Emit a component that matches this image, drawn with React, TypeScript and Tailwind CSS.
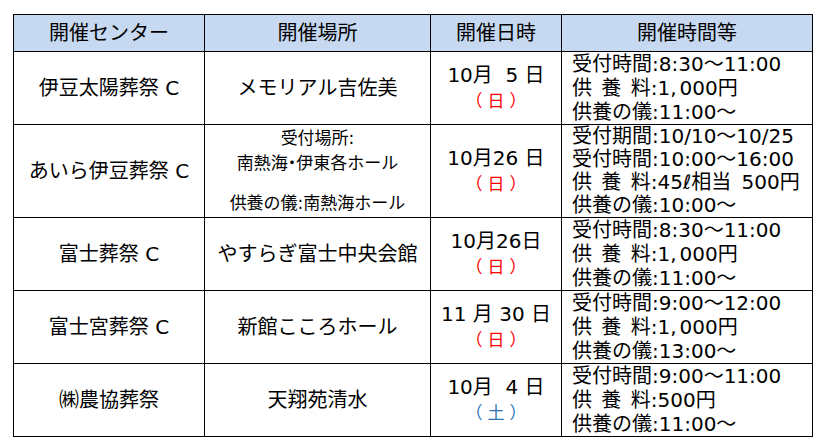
import React from "react";

const FONT = "[font-family:'DejaVu_Sans','Noto_Sans_CJK_JP',sans-serif]";

function DateCell({ date, dow, blue }: { date: string; dow: string; blue?: boolean }) {
  return (
    <td className="border border-black text-center align-middle">
      <div className="text-[20px] leading-[26px] whitespace-pre text-black">{date}</div>
      <div
        className={`text-[17px] leading-[26px] tracking-[5px] pl-[5px] ${
          blue ? "text-[#2f75b5]" : "text-[#ff0000]"
        }`}
      >
        （{dow}）
      </div>
    </td>
  );
}

const Kyo = () => <span className="[word-spacing:3px]">供 養 料</span>;
const Comma = () => <span className="tracking-[3px]">,</span>;

function InfoCell({ lines, leading }: { lines: React.ReactNode[]; leading?: string }) {
  return (
    <td className="border border-black align-middle pl-[10px]">
      {lines.map((l, i) => (
        <div key={i} className={`text-[20px] whitespace-pre text-black ${leading ?? "leading-[24px]"}`}>
          {l}
        </div>
      ))}
    </td>
  );
}

const fee1000 = (
  <>
    <Kyo />:1<Comma />000円
  </>
);

export default function App() {
  return (
    <div className={`w-[827px] h-[446px] bg-white pl-[13px] pt-[14px] ${FONT}`}>
      <table className="table-fixed border-collapse w-[799px] text-black">
        <colgroup>
          <col className="w-[191px]" />
          <col className="w-[226px]" />
          <col className="w-[131px]" />
          <col className="w-[251px]" />
        </colgroup>
        <thead>
          <tr className="h-[37px] bg-[#c6d9f0]">
            <th className="border border-black font-normal text-[20px] text-center align-middle">開催センター</th>
            <th className="border border-black font-normal text-[20px] text-center align-middle">開催場所</th>
            <th className="border border-black font-normal text-[20px] text-center align-middle">開催日時</th>
            <th className="border border-black font-normal text-[20px] text-center align-middle">開催時間等</th>
          </tr>
        </thead>
        <tbody>
          <tr className="h-[72px]">
            <td className="border border-black text-center align-middle text-[20px]">伊豆太陽葬祭 C</td>
            <td className="border border-black text-center align-middle text-[20px]">メモリアル吉佐美</td>
            <DateCell date="10月  5 日" dow="日" />
            <InfoCell lines={["受付時間:8:30～11:00", fee1000, "供養の儀:11:00～"]} />
          </tr>
          <tr className="h-[93px]">
            <td className="border border-black text-center align-middle text-[20px]">あいら伊豆葬祭 C</td>
            <td className="border border-black text-center align-middle text-[17px]">
              <div className="leading-[25px]">受付場所:</div>
              <div className="leading-[25px]">
                南熱海<span className="[font-feature-settings:'palt']">・</span>伊東各ホール
              </div>
              <div className="leading-[25px] mt-[15px]">供養の儀:南熱海ホール</div>
            </td>
            <DateCell date="10月26 日" dow="日" />
            <InfoCell
              leading="leading-[23px]"
              lines={[
                "受付期間:10/10～10/25",
                "受付時間:10:00～16:00",
                <>
                  <Kyo />:45ℓ相当<span className="[word-spacing:4px]"> </span>500円
                </>,
                "供養の儀:10:00～",
              ]}
            />
          </tr>
          <tr className="h-[73px]">
            <td className="border border-black text-center align-middle text-[20px]">富士葬祭 C</td>
            <td className="border border-black text-center align-middle text-[20px]">やすらぎ富士中央会館</td>
            <DateCell date="10月26日" dow="日" />
            <InfoCell lines={["受付時間:8:30～11:00", fee1000, "供養の儀:11:00～"]} />
          </tr>
          <tr className="h-[73px]">
            <td className="border border-black text-center align-middle text-[20px]">富士宮葬祭 C</td>
            <td className="border border-black text-center align-middle text-[20px]">新館こころホール</td>
            <DateCell date="11 月 30 日" dow="日" />
            <InfoCell lines={["受付時間:9:00～12:00", fee1000, "供養の儀:13:00～"]} />
          </tr>
          <tr className="h-[73px]">
            <td className="border border-black text-center align-middle text-[20px]">㈱農協葬祭</td>
            <td className="border border-black text-center align-middle text-[20px]">天翔苑清水</td>
            <DateCell date="10月  4 日" dow="土" blue />
            <InfoCell
              lines={[
                "受付時間:9:00～11:00",
                <>
                  <Kyo />:500円
                </>,
                "供養の儀:11:00～",
              ]}
            />
          </tr>
        </tbody>
      </table>
    </div>
  );
}
